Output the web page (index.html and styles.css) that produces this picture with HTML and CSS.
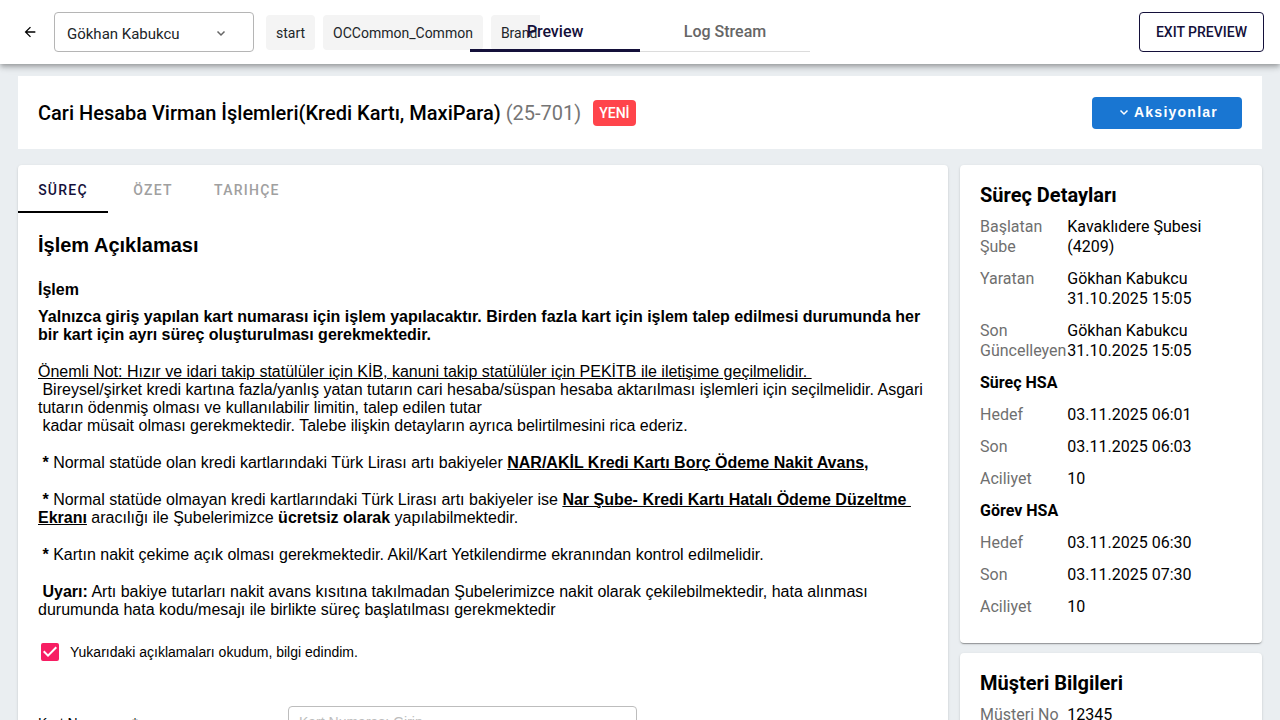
FILE: index.html
```html
<!DOCTYPE html>
<html lang="tr">
<head>
<meta charset="utf-8">
<meta name="viewport" content="width=device-width, initial-scale=1">
<title>Cari Hesaba Virman İşlemleri</title>
<link rel="stylesheet" href="styles.css">
</head>
<body>
<header class="topbar">
  <button class="back" type="button" aria-label="Back">
    <svg viewBox="0 0 24 24" width="16" height="16"><path d="M20 11H7.83l5.59-5.59L12 4l-8 8 8 8 1.41-1.41L7.83 13H20z"/></svg>
  </button>
  <div class="user-select">
    <select aria-label="User"><option>Gökhan Kabukcu</option></select>
    <svg class="chevron" viewBox="0 0 16 16" width="16" height="16"><path d="M4.500 6.500 8 10l3.500-3.500"/></svg>
  </div>
  <nav class="crumbs" aria-label="Path">
    <span class="crumb">start</span>
    <span class="crumb">OCCommon_Common</span>
    <span class="crumb">Brand</span>
  </nav>
  <div class="view-tabs" role="tablist">
    <button class="view-tab is-active" type="button" role="tab" aria-selected="true">Preview</button>
    <button class="view-tab" type="button" role="tab" aria-selected="false">Log Stream</button>
  </div>
  <button class="exit" type="button">EXIT PREVIEW</button>
</header>

<main class="page">
  <section class="title-card">
    <h1 class="title">Cari Hesaba Virman İşlemleri(Kredi Kartı, MaxiPara) <span class="title-code">(25-701)</span></h1>
    <span class="badge">YENİ</span>
    <button class="actions" type="button">
      <svg class="chevron" viewBox="0 0 16 16" width="16" height="16"><path d="M4.500 6.500 8 10l3.500-3.500"/></svg>
      <span>Aksiyonlar</span>
    </button>
  </section>

  <div class="columns">
    <section class="card process">
      <div class="tabs" role="tablist">
        <button class="tab is-active" type="button" role="tab" aria-selected="true">SÜREÇ</button>
        <button class="tab" type="button" role="tab" aria-selected="false">ÖZET</button>
        <button class="tab" type="button" role="tab" aria-selected="false">TARIHÇE</button>
      </div>
      <div class="process-body">
        <h2 class="section-title">İşlem Açıklaması</h2>
        <h3 class="field-title">İşlem</h3>
        <div class="notes">
          <p><b>Yalnızca giriş yapılan kart numarası için işlem yapılacaktır. Birden fazla kart için işlem talep edilmesi durumunda her bir kart için ayrı süreç oluşturulması gerekmektedir.</b></p>
          <p><u>Önemli Not: Hızır ve idari takip statülüler için KİB, kanuni takip statülüler için PEKİTB ile iletişime geçilmelidir.&nbsp;</u><br>&nbsp;Bireysel/şirket kredi kartına fazla/yanlış yatan tutarın cari hesaba/süspan hesaba aktarılması işlemleri için seçilmelidir. Asgari tutarın ödenmiş olması ve kullanılabilir limitin, talep edilen tutar<br>&nbsp;kadar müsait olması gerekmektedir. Talebe ilişkin detayların ayrıca belirtilmesini rica ederiz.</p>
          <p>&nbsp;<b>*</b> Normal statüde olan kredi kartlarındaki Türk Lirası artı bakiyeler <b><u>NAR/AKİL Kredi Kartı Borç Ödeme Nakit Avans,</u></b></p>
          <p>&nbsp;<b>*</b> Normal statüde olmayan kredi kartlarındaki Türk Lirası artı bakiyeler ise <b><u>Nar Şube- Kredi Kartı Hatalı Ödeme Düzeltme&nbsp; Ekranı</u></b> aracılığı ile Şubelerimizce <b>ücretsiz olarak</b> yapılabilmektedir.</p>
          <p>&nbsp;<b>*</b> Kartın nakit çekime açık olması gerekmektedir. Akil/Kart Yetkilendirme ekranından kontrol edilmelidir.</p>
          <p>&nbsp;<b>Uyarı:</b> Artı bakiye tutarları nakit avans kısıtına takılmadan Şubelerimizce nakit olarak çekilebilmektedir, hata alınması durumunda hata kodu/mesajı ile birlikte süreç başlatılması gerekmektedir</p>
        </div>
        <label class="consent">
          <span class="check">
            <input type="checkbox" checked>
            <svg viewBox="0 0 18 18" width="18" height="18"><path d="M7 14 2 9l1.410-1.410L7 11.170l7.590-7.590L16 5z"/></svg>
          </span>
          Yukarıdaki açıklamaları okudum, bilgi edindim.
        </label>
        <div class="form-row">
          <label for="card-number">Kart Numarası *</label>
          <input id="card-number" type="text" placeholder="Kart Numarası Girin">
        </div>
      </div>
    </section>

    <aside class="side">
      <section class="card details">
        <h2>Süreç Detayları</h2>
        <dl>
          <dt>Başlatan Şube</dt><dd>Kavaklıdere Şubesi (4209)</dd>
          <dt>Yaratan</dt><dd>Gökhan Kabukcu<br>31.10.2025 15:05</dd>
          <dt>Son Güncelleyen</dt><dd>Gökhan Kabukcu<br>31.10.2025 15:05</dd>
        </dl>
        <h3>Süreç HSA</h3>
        <dl>
          <dt>Hedef</dt><dd>03.11.2025 06:01</dd>
          <dt>Son</dt><dd>03.11.2025 06:03</dd>
          <dt>Aciliyet</dt><dd>10</dd>
        </dl>
        <h3>Görev HSA</h3>
        <dl>
          <dt>Hedef</dt><dd>03.11.2025 06:30</dd>
          <dt>Son</dt><dd>03.11.2025 07:30</dd>
          <dt>Aciliyet</dt><dd>10</dd>
        </dl>
      </section>
      <section class="card details">
        <h2>Müşteri Bilgileri</h2>
        <dl>
          <dt>Müşteri No</dt><dd>12345</dd>
        </dl>
      </section>
    </aside>
  </div>
</main>
</body>
</html>
```

FILE: styles.css
```css
* {
  box-sizing: border-box;
}

body {
  margin: 0;
  height: 100vh;
  display: flex;
  flex-direction: column;
  overflow: hidden;
  background: #eaeef1;
  color: #000;
  font-family: Roboto, "Liberation Sans", sans-serif;
  font-size: 16px;
  line-height: 20px;
}

h1, h2, h3, p, dl, dd {
  margin: 0;
}

button, input, select {
  font: inherit;
  color: inherit;
}

button {
  padding: 0;
  border: 0;
  background: none;
  cursor: pointer;
}

svg {
  display: block;
}

.chevron {
  fill: none;
  stroke: currentColor;
  stroke-width: 1.5;
}

/* Top bar */

.topbar {
  position: relative;
  z-index: 1;
  flex: none;
  display: flex;
  align-items: center;
  height: 64px;
  padding: 0 16px 0 22px;
  background: #fff;
  box-shadow: 0 2px 4px -1px rgba(0, 0, 0, .2), 0 4px 5px rgba(0, 0, 0, .14), 0 1px 10px rgba(0, 0, 0, .12);
}

.back {
  margin-right: 16px;
}

.user-select {
  position: relative;
  width: 200px;
  margin-right: 12px;
}

.user-select select {
  appearance: none;
  width: 100%;
  height: 40px;
  padding: 3px 40px 0 12px;
  border: 1px solid #b5b5b5;
  border-radius: 4px;
  background: #fff;
  color: #212529;
  font-size: 15px;
}

.user-select .chevron {
  position: absolute;
  top: 13px;
  right: 25px;
  color: #666;
  pointer-events: none;
}

.crumbs {
  display: flex;
  gap: 8px;
  width: 274px;
  overflow: hidden;
}

.crumb {
  flex: none;
  padding: 8px 10px 7px;
  border-radius: 4px;
  background: #f4f4f4;
  color: #212529;
  font-size: 14px;
}

.view-tabs {
  position: absolute;
  top: 12px;
  left: 50%;
  display: flex;
  width: 340px;
  height: 40px;
  margin-left: -170px;
  box-shadow: inset 0 -1px #dcdcdc;
}

.view-tab {
  flex: 1;
  padding-top: 2px;
  border-bottom: 3px solid transparent;
  color: #666;
  font-weight: 500;
}

.view-tab.is-active {
  border-color: #14103a;
  color: #14103a;
}

.exit {
  height: 40px;
  margin-left: auto;
  padding: 0 16px;
  border: 1px solid #14103a;
  border-radius: 4px;
  color: #14103a;
  font-size: 14px;
  font-weight: 500;
}

/* Page */

.page {
  flex: 1;
  min-height: 0;
  overflow-y: auto;
  scrollbar-width: none;
  padding: 12px 18px;
}

.title-card {
  display: flex;
  align-items: center;
  min-height: 73px;
  margin-bottom: 16px;
  padding: 0 20px;
  background: #fff;
}

.title {
  font-size: 20px;
  line-height: 24px;
  font-weight: 500;
}

.title-code {
  color: #757575;
  font-weight: 400;
}

.badge {
  margin-left: 12px;
  padding: 3px 6px;
  border-radius: 4px;
  background: #ff444b;
  color: #fff;
  font-size: 14px;
  font-weight: 500;
}

.actions {
  display: flex;
  align-items: center;
  justify-content: center;
  gap: 2px;
  width: 150px;
  height: 32px;
  padding-bottom: 2px;
  margin-left: auto;
  border-radius: 4px;
  background: #1976d2;
  color: #fff;
  font-family: "Liberation Sans", Arial, sans-serif;
  font-size: 14px;
  font-weight: 700;
  letter-spacing: 1.25px;
}

.columns {
  display: grid;
  grid-template-columns: calc(75% - 3px) minmax(0, 1fr);
  column-gap: 12px;
}

.card {
  border-radius: 4px;
  background: #fff;
  box-shadow: 0 2px 1px -1px rgba(0, 0, 0, .2), 0 1px 1px rgba(0, 0, 0, .14), 0 1px 3px rgba(0, 0, 0, .12);
}

/* Process card */

.tabs {
  display: flex;
}

.tab {
  min-width: 90px;
  height: 48px;
  padding: 3px 16px 0;
  border-bottom: 2px solid transparent;
  color: #a0a0a0;
  font-size: 14px;
  font-weight: 500;
  letter-spacing: 1.25px;
}

.tab.is-active {
  border-color: #000;
  color: #14103a;
}

.process-body {
  padding: 20px;
  font-family: "Liberation Sans", Arial, sans-serif;
}

.section-title {
  margin-bottom: 24px;
  font-size: 20px;
  line-height: 24px;
}

.field-title {
  margin-bottom: 9px;
  font-size: 16px;
  line-height: 18px;
}

.notes {
  display: flex;
  flex-direction: column;
  gap: 19px;
  margin-bottom: 21px;
  line-height: 18px;
}

.consent {
  display: flex;
  align-items: center;
  gap: 8px;
  height: 24px;
  padding-left: 3px;
  margin-bottom: 42px;
  font-size: 14px;
}

.check {
  display: grid;
  margin-right: 3px;
}

.check input,
.check svg {
  grid-area: 1 / 1;
}

.check input {
  appearance: none;
  width: 18px;
  height: 18px;
  margin: 0;
  border: 2px solid #757575;
  border-radius: 2px;
}

.check input:checked {
  border-color: #f71e63;
  background: #f71e63;
}

.check svg {
  fill: #fff;
  pointer-events: none;
}

.form-row {
  display: grid;
  grid-template-columns: 250px 349px;
  align-items: center;
  font-size: 14px;
}

.form-row label {
  padding-top: 2px;
}

.form-row input {
  height: 32px;
  padding: 0 10px;
  border: 1px solid #bdbdbd;
  border-radius: 4px;
}

.form-row input::placeholder {
  color: #bdbdbd;
}

/* Side column */

.side {
  display: flex;
  flex-direction: column;
  gap: 10px;
}

.details {
  padding: 18px 20px 14px;
}

.details h2 {
  margin-bottom: 10px;
  font-size: 20px;
  line-height: 24px;
}

.details h3 {
  margin-bottom: 12px;
  font-size: 16px;
  line-height: 20px;
}

.details dl {
  display: grid;
  grid-template-columns: minmax(0, 1fr) minmax(0, 2fr);
  row-gap: 12px;
  margin-bottom: 12px;
}

.details dt {
  color: #6f6f6f;
}

.details dd {
  padding-right: 16px;
}
```
